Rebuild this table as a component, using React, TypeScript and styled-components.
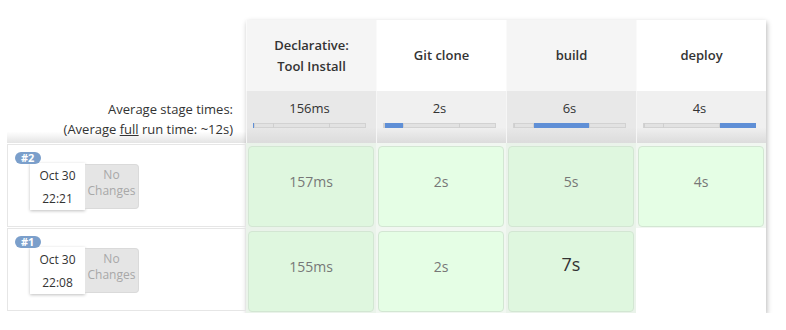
import React from "react";
import styled, { createGlobalStyle } from "styled-components";

const GlobalStyle = createGlobalStyle`
  body {
    margin: 0;
    font-family: "Open Sans", "Noto Sans", sans-serif;
    font-size: 12px;
    color: #333;
    background: #fff;
  }
`;

const stages = [
  { name: ["Declarative:", "Tool Install"], avg: "156ms", ms: 156 },
  { name: ["Git clone"], avg: "2s", ms: 2000 },
  { name: ["build"], avg: "6s", ms: 6000 },
  { name: ["deploy"], avg: "4s", ms: 4000 },
];

const builds = [
  { id: 2, date: "Oct 30", time: "22:21", cells: ["157ms", "2s", "5s", "4s"] },
  { id: 1, date: "Oct 30", time: "22:08", cells: ["155ms", "2s", "7s", null] },
];

const Page = styled.div`
  display: flex;
  align-items: flex-start;
  padding: 20px 0 0 7px;
`;

const Side = styled.div`
  width: 239px;
  display: flex;
  flex-direction: column;
`;

const SideHead = styled.div`
  height: 71px;
`;

const AvgLabel = styled.div`
  height: 52px;
  box-sizing: border-box;
  padding: 8px 13px 0 0;
  text-align: right;
  font-size: 13px;
  line-height: 20px;
  color: #333;
  background: linear-gradient(to bottom, #fff 0%, #fff 78%, #e4e4e4 100%);

  u {
    text-decoration: underline;
  }
`;

const BuildRows = styled.div`
  display: flex;
  flex-direction: column;
  gap: 1px;
  margin-top: 1px;
`;

const BuildRow = styled.div`
  position: relative;
  height: 83px;
  box-sizing: border-box;
  border: 1px solid #e6e6e6;
  padding: 18px 0 0 22px;
`;

const Badge = styled.span`
  position: absolute;
  top: 7px;
  left: 7px;
  z-index: 2;
  padding: 0 7px 0 6px;
  height: 12px;
  line-height: 12px;
  border-radius: 7px;
  background: #7b9fcb;
  color: #fff;
  font-size: 11px;
  font-weight: 700;
`;

const BuildInfo = styled.div`
  display: flex;
  height: 47px;
`;

const DateCard = styled.div`
  width: 55px;
  background: #fff;
  box-shadow: 0 1px 3px rgba(0, 0, 0, 0.25);
  text-align: center;
  font-size: 12px;
  line-height: 23px;
  color: #333;
  padding-top: 1px;
  box-sizing: border-box;
`;

const Changes = styled.div`
  width: 54px;
  margin-top: 1px;
  height: 45px;
  box-sizing: border-box;
  background: #e5e5e5;
  border: 1px solid #dadada;
  border-left: none;
  border-radius: 0 4px 4px 0;
  color: #a8a8a8;
  text-align: center;
  font-size: 12px;
  line-height: 16px;
  padding-top: 2px;
`;

const Table = styled.div`
  display: grid;
  grid-template-columns: repeat(4, 130px);
  grid-template-rows: 71px 52px 85px 85px;
  box-shadow: 1px 2px 5px rgba(0, 0, 0, 0.28);
`;

const HeadCell = styled.div<{ $alt: boolean }>`
  display: flex;
  align-items: center;
  justify-content: center;
  text-align: center;
  font-weight: 600;
  font-size: 13px;
  line-height: 21px;
  color: #333;
  background: ${(p) => (p.$alt ? "#f5f5f5" : "#fff")};
  border-left: 1px solid #fafafa;
`;

const AvgCell = styled.div<{ $alt: boolean }>`
  box-sizing: border-box;
  padding: 8px 0 0 6px;
  border-left: 1px solid #f6f6f6;
  background: linear-gradient(
    to bottom,
    ${(p) => (p.$alt ? "#e8e8e8" : "#f0f0f0")} 0%,
    ${(p) => (p.$alt ? "#e8e8e8" : "#f0f0f0")} 70%,
    #dcdcdc 100%
  );
`;

const AvgTime = styled.div`
  width: 113px;
  text-align: center;
  font-size: 13px;
  line-height: 18px;
  color: #333;
`;

const Bar = styled.div`
  display: flex;
  width: 113px;
  height: 5px;
  margin-top: 6px;
  background: #e2e2e2;
  box-shadow: inset 0 0 0 1px #d2d2d2;
`;

const Segment = styled.div<{ $on: boolean }>`
  height: 100%;
  box-sizing: border-box;
  border-left: 1px solid #cfcfcf;
  background: ${(p) => (p.$on ? "#5f8fd6" : "transparent")};

  &:first-child {
    border-left: none;
  }
`;

const CellWrap = styled.div<{ $alt: boolean; $empty: boolean }>`
  box-sizing: border-box;
  padding: 3px 2px 1px 2px;
  background: ${(p) => (p.$empty ? "#fff" : p.$alt ? "#eaf3ea" : "#f1f7f1")};
`;

const StageCell = styled.div<{ $alt: boolean; $big: boolean }>`
  height: 100%;
  box-sizing: border-box;
  border: 1px solid #d3e6d3;
  border-radius: 4px;
  background: ${(p) => (p.$alt ? "#dff7df" : "#e5fee5")};
  text-align: center;
  padding-top: ${(p) => (p.$big ? "22px" : "25px")};
  font-size: ${(p) => (p.$big ? "18px" : "14px")};
  line-height: 20px;
  color: ${(p) => (p.$big ? "#333" : "#777")};
`;

const total = stages.reduce((sum, s) => sum + s.ms, 0);

export default function App() {
  return (
    <>
      <GlobalStyle />
      <Page>
        <Side>
          <SideHead />
          <AvgLabel>
            Average stage times:
            <br />
            (Average <u>full</u> run time: ~12s)
          </AvgLabel>
          <BuildRows>
            {builds.map((b) => (
              <BuildRow key={b.id}>
                <Badge>#{b.id}</Badge>
                <BuildInfo>
                  <DateCard>
                    {b.date}
                    <br />
                    {b.time}
                  </DateCard>
                  <Changes>
                    No
                    <br />
                    Changes
                  </Changes>
                </BuildInfo>
              </BuildRow>
            ))}
          </BuildRows>
        </Side>
        <Table>
          {stages.map((s, i) => (
            <HeadCell key={"h" + i} $alt={i % 2 === 0}>
              <div>
                {s.name.map((line) => (
                  <div key={line}>{line}</div>
                ))}
              </div>
            </HeadCell>
          ))}
          {stages.map((s, i) => (
            <AvgCell key={"a" + i} $alt={i % 2 === 0}>
              <AvgTime>{s.avg}</AvgTime>
              <Bar>
                {stages.map((seg, j) => (
                  <Segment
                    key={j}
                    $on={j === i}
                    style={{ width: `${(seg.ms / total) * 100}%` }}
                  />
                ))}
              </Bar>
            </AvgCell>
          ))}
          {builds.map((b) =>
            b.cells.map((c, i) => (
              <CellWrap key={b.id + "-" + i} $alt={i % 2 === 0} $empty={c === null}>
                {c !== null && (
                  <StageCell $alt={i % 2 === 0} $big={b.id === 1 && i === 2}>
                    {c}
                  </StageCell>
                )}
              </CellWrap>
            ))
          )}
        </Table>
      </Page>
    </>
  );
}
